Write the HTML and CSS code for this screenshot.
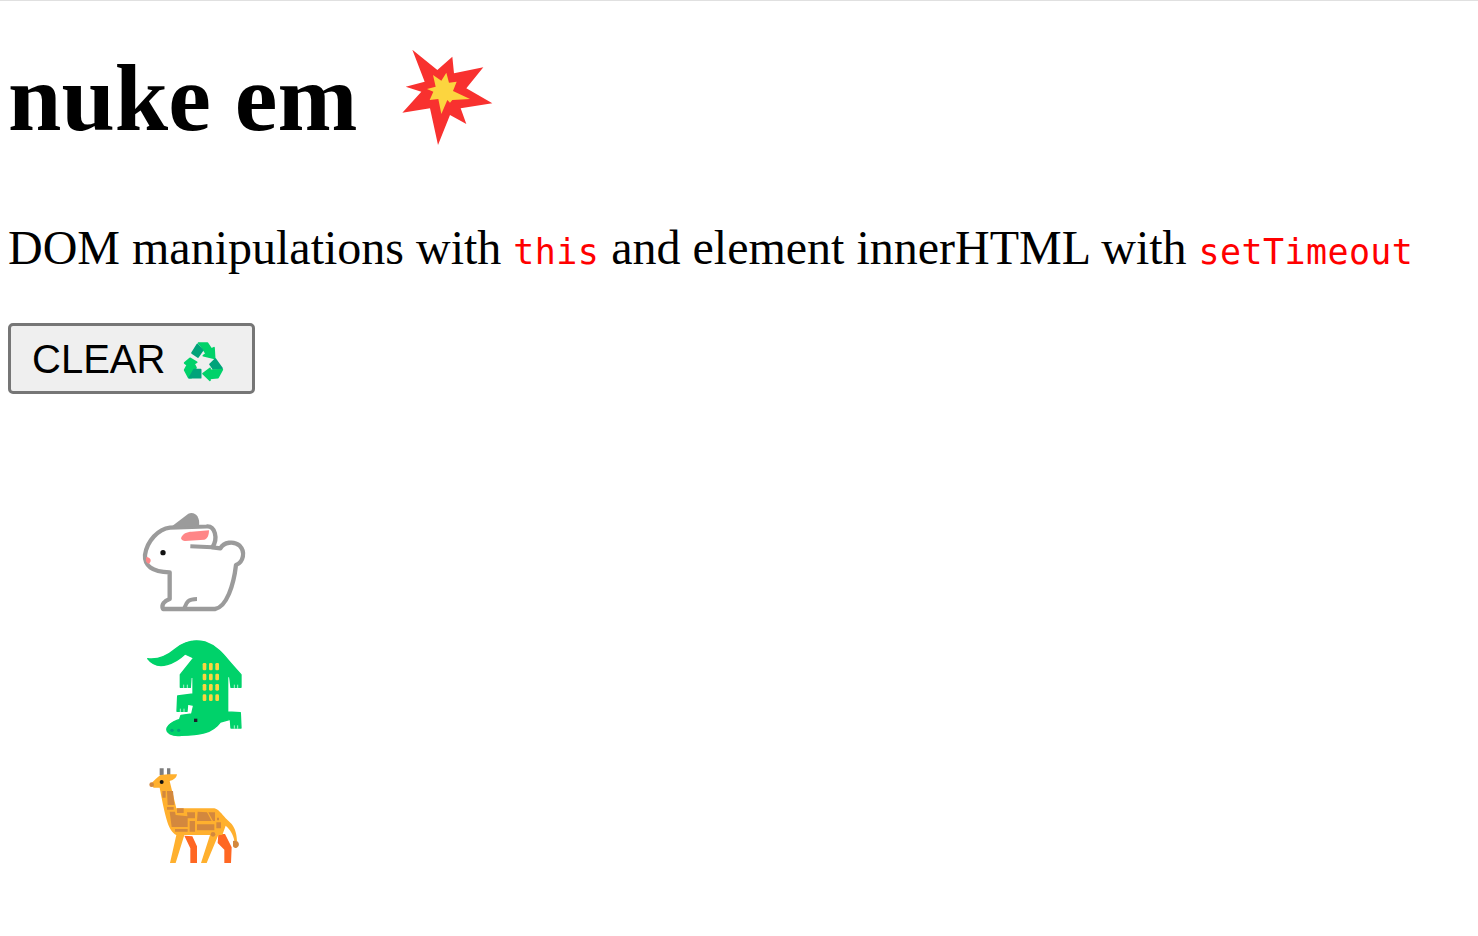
FILE: index.html
```html
<!DOCTYPE html>
<html lang="en">
<head>
    <meta charset="UTF-8">
    <title>nuke em</title>
    <link rel="stylesheet" href="styles.css">
</head>
<body>
    <h1 class="title">nuke em
        <svg class="boom" viewBox="0 0 360 330">
            <path fill="#f8312f" d="M70 29L145 90L190 50L195 100L283 82L232 145L310 190L215 205L232 252L183 225L147 315L123 205L40 218L97 155L50 140L107 125Z"/>
            <path fill="#fcd53f" d="M172 98L180 128L203 125L192 153L243 177L190 180L183 188L175 180L157 222L148 177L122 180L133 155L114 147L140 140L132 105L157 122Z"/>
        </svg>
    </h1>
    <p class="intro">DOM manipulations with <code>this</code> and element innerHTML with <code>setTimeout</code></p>
    <button class="clear">CLEAR
        <svg class="recycle" viewBox="0 0 180 150">
            <g stroke-width="5" stroke-linejoin="round">
                <path fill="#00d26a" stroke="#00d26a" d="M74 24L100 24L112 42L120 38L122 70L88 62L96 56L86 40Z"/>
                <path fill="#00a37a" stroke="#00a37a" d="M70 28L86 46L72 66L54 54Z"/>
                <path fill="#00a37a" stroke="#00a37a" d="M124 72L144 100L118 102L108 88Z"/>
                <path fill="#00d26a" stroke="#00d26a" d="M145 104L132 128L108 130L108 136L87 116L108 100L108 106Z"/>
                <path fill="#00d26a" stroke="#00d26a" d="M48 70L68 82L60 86L66 98L52 128L44 128L32 105L40 90L32 84Z"/>
                <path fill="#00a37a" stroke="#00a37a" d="M60 104L80 104L80 128L46 128Z"/>
            </g>
        </svg>
    </button>
    <div class="animals">
        <svg class="animal rabbit" viewBox="0 0 360 345">
            <path fill="#fff" stroke="#9b9b9b" stroke-width="13" stroke-linejoin="round" d="M105 68C70 72 36 108 30 150C28 182 50 200 104 202L104 282C88 288 78 298 84 312L240 312C275 306 296 240 303 180C325 172 332 140 314 122C296 106 266 112 256 130L232 127C250 100 240 62 215 64Z"/>
            <path fill="#9b9b9b" d="M105 68L160 26C180 18 196 36 192 62Z"/>
            <path fill="#ff8687" d="M138 100C142 86 156 80 170 80L222 76C222 90 218 102 208 104L150 108C144 108 140 106 138 100Z"/>
            <path fill="none" stroke="#9b9b9b" stroke-width="12" d="M166 124L232 127M148 310C154 295 156 282 186 282"/>
            <circle cx="84" cy="143" r="8" fill="#111"/>
            <path fill="#ff8687" d="M34 156C46 156 52 168 42 176C36 176 30 170 34 156Z"/>
        </svg>
        <svg class="animal" viewBox="0 0 360 336">
            <path fill="#00d26a" stroke="#00d26a" stroke-width="4" stroke-linejoin="round" d="M38 80C66 84 96 72 122 50C150 28 180 22 210 30C250 44 270 74 288 94L318 128L318 166L288 166L284 134L278 134L278 240L316 242L318 288L288 288L286 262L256 270C232 304 190 310 140 310C110 314 92 302 96 288C104 272 120 268 134 262L138 250L170 246L176 220L158 216L156 238L126 238L128 192L174 186L174 136L168 136L166 166L136 166L136 128L176 78L150 66C125 90 70 122 38 80Z"/>
            <path fill="none" stroke="#fff" stroke-width="2" d="M146 158V168M157 158V168M298 158V168M308 158V168M136 230V240M147 230V240M298 280V290M308 280V290"/>
            <g fill="#fcd53f">
                <rect x="203" y="93" width="11" height="22" rx="4"/><rect x="222" y="93" width="11" height="22" rx="4"/><rect x="241" y="93" width="11" height="22" rx="4"/>
                <rect x="203" y="125" width="11" height="20" rx="4"/><rect x="222" y="125" width="11" height="20" rx="4"/><rect x="241" y="125" width="11" height="20" rx="4"/>
                <rect x="203" y="156" width="11" height="20" rx="4"/><rect x="222" y="156" width="11" height="20" rx="4"/><rect x="241" y="156" width="11" height="20" rx="4"/>
                <rect x="203" y="187" width="11" height="20" rx="4"/><rect x="222" y="187" width="11" height="20" rx="4"/><rect x="241" y="187" width="11" height="20" rx="4"/>
            </g>
            <rect x="177" y="260" width="10" height="10" fill="#1c1c2a"/>
            <circle cx="111" cy="295" r="5" fill="#00a37a"/>
            <circle cx="131" cy="295" r="5" fill="#00a37a"/>
        </svg>
        <svg class="animal" viewBox="0 0 360 336">
            <path fill="#ff6723" d="M148 230L172 232L186 262L186 312L166 312L166 268ZM250 225L270 225L290 265L288 312L268 312L268 272L248 252Z"/>
            <path fill="#7d7d7d" d="M74 28H86V48H74ZM96 28H106V48H96Z"/>
            <path fill="#ffb02e" d="M62 60L76 48L100 46L126 46C124 58 114 64 104 66L124 148L238 148C250 150 260 165 272 178L290 195C302 210 305 228 306 246L298 246C296 228 286 212 272 200L262 228L250 228L215 312L198 312L225 228L148 228L122 312L105 312L124 228C100 215 92 180 74 86L56 86L46 76Z"/>
            <path fill="#d3883e" d="M82 96H92V116H82ZM96 96H114L118 138H98ZM96 144H116V152H96ZM126 148H146V162H126ZM104 158L120 158L122 168L158 172V204H110ZM156 160H180V178H158ZM188 158L216 160L230 186L186 186ZM220 160H240V186H234ZM164 186H180V218H164ZM186 196H238V214H186ZM244 190H258V208H244ZM120 210H158V218H120ZM246 176H252V184H246Z"/>
            <circle cx="234" cy="226" r="7" fill="#d3883e"/>
            <circle cx="80" cy="69" r="6" fill="#111"/>
            <circle cx="50" cy="77" r="7" fill="#d3883e"/>
            <path fill="#d3883e" d="M294 246C306 242 314 250 311 260C306 268 298 270 294 262Z"/>
        </svg>
    </div>
</body>
</html>
```

FILE: styles.css
```css
html{
    border-top: 1px solid #e0e0e0;
}
body{
    margin: 0 8px;
    font-family: "Liberation Serif", serif;
    color: #000;
}
.title{
    font-size: 96px;
    line-height: 110px;
    margin: 39px 0 0;
}
.boom{
    width: 120px;
    height: 110px;
    vertical-align: -20px;
    margin-left: 8px;
}
.intro{
    font-size: 48px;
    line-height: 55px;
    margin: 67px 0 0;
    white-space: nowrap;
}
code{
    font-family: "DejaVu Sans Mono", monospace;
    font-size: 35px;
    letter-spacing: .4px;
    color: #f00;
}
.clear{
    display: flex;
    align-items: center;
    width: 247px;
    height: 71px;
    margin-top: 43px;
    padding: 2px 0 0 21px;
    background: #efefef;
    border: 3px solid #767676;
    border-radius: 5px;
    font-family: "Liberation Sans", sans-serif;
    font-size: 40px;
    color: #000;
}
.recycle{
    width: 60px;
    height: 50px;
    margin-left: 9px;
}
.animals{
    display: flex;
    flex-direction: column;
    width: 120px;
    margin: 111px 0 0 127px;
}
.animal{
    width: 120px;
    height: 112px;
    margin-bottom: 15px;
}
.rabbit{
    height: 115px;
    margin-bottom: 12px;
}
```
